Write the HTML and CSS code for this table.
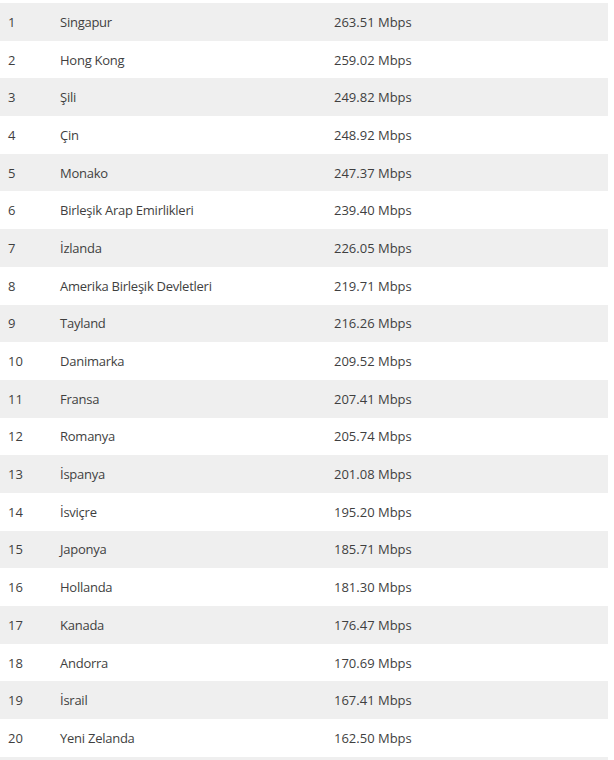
FILE: index.html
```html
<!DOCTYPE html>
<html lang="tr">
<head>
<meta charset="utf-8">
<link rel="stylesheet" href="styles.css">
</head>
<body>
<div class="table">
  <div class="row"><span class="rank">1</span><span class="country">Singapur</span><span class="speed">263.51 Mbps</span></div>
  <div class="row"><span class="rank">2</span><span class="country">Hong Kong</span><span class="speed">259.02 Mbps</span></div>
  <div class="row"><span class="rank">3</span><span class="country">Şili</span><span class="speed">249.82 Mbps</span></div>
  <div class="row"><span class="rank">4</span><span class="country">Çin</span><span class="speed">248.92 Mbps</span></div>
  <div class="row"><span class="rank">5</span><span class="country">Monako</span><span class="speed">247.37 Mbps</span></div>
  <div class="row"><span class="rank">6</span><span class="country">Birleşik Arap Emirlikleri</span><span class="speed">239.40 Mbps</span></div>
  <div class="row"><span class="rank">7</span><span class="country">İzlanda</span><span class="speed">226.05 Mbps</span></div>
  <div class="row"><span class="rank">8</span><span class="country">Amerika Birleşik Devletleri</span><span class="speed">219.71 Mbps</span></div>
  <div class="row"><span class="rank">9</span><span class="country">Tayland</span><span class="speed">216.26 Mbps</span></div>
  <div class="row"><span class="rank">10</span><span class="country">Danimarka</span><span class="speed">209.52 Mbps</span></div>
  <div class="row"><span class="rank">11</span><span class="country">Fransa</span><span class="speed">207.41 Mbps</span></div>
  <div class="row"><span class="rank">12</span><span class="country">Romanya</span><span class="speed">205.74 Mbps</span></div>
  <div class="row"><span class="rank">13</span><span class="country">İspanya</span><span class="speed">201.08 Mbps</span></div>
  <div class="row"><span class="rank">14</span><span class="country">İsviçre</span><span class="speed">195.20 Mbps</span></div>
  <div class="row"><span class="rank">15</span><span class="country">Japonya</span><span class="speed">185.71 Mbps</span></div>
  <div class="row"><span class="rank">16</span><span class="country">Hollanda</span><span class="speed">181.30 Mbps</span></div>
  <div class="row"><span class="rank">17</span><span class="country">Kanada</span><span class="speed">176.47 Mbps</span></div>
  <div class="row"><span class="rank">18</span><span class="country">Andorra</span><span class="speed">170.69 Mbps</span></div>
  <div class="row"><span class="rank">19</span><span class="country">İsrail</span><span class="speed">167.41 Mbps</span></div>
  <div class="row"><span class="rank">20</span><span class="country">Yeni Zelanda</span><span class="speed">162.50 Mbps</span></div>
  <div class="row"></div>
</div>
</body>
</html>
```
FILE: styles.css
```css
html, body {
  margin: 0;
  padding: 0;
  background: #ffffff;
}
body {
  font-family: "Open Sans", "Noto Sans", sans-serif;
  font-size: 13px;
  color: #3f3f3f;
}
.table {
  width: 608px;
  padding-top: 3px;
}
.row {
  display: grid;
  grid-template-columns: 52px 274px 1fr;
  align-items: center;
  height: 37.7px;
  padding-left: 8px;
  box-sizing: border-box;
}
.row:nth-child(odd) {
  background: #efefef;
}
.rank, .country, .speed {
  white-space: nowrap;
}
.country {
  letter-spacing: -0.25px;
}
```
